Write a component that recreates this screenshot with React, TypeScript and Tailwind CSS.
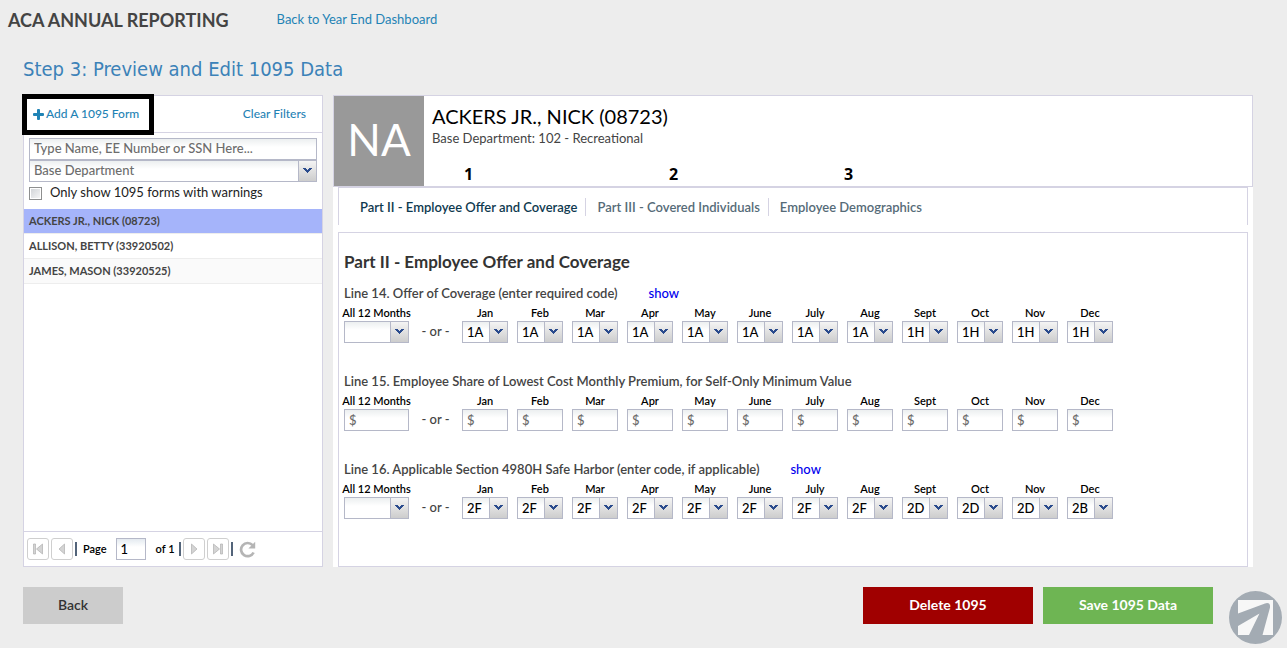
import { useId, useState } from "react";
import type { ReactNode } from "react";

const MONTHS = ["Jan", "Feb", "Mar", "Apr", "May", "June", "July", "Aug", "Sept", "Oct", "Nov", "Dec"];

const OFFER_CODES = ["1A", "1A", "1A", "1A", "1A", "1A", "1A", "1A", "1H", "1H", "1H", "1H"];
const HARBOR_CODES = ["2F", "2F", "2F", "2F", "2F", "2F", "2F", "2F", "2D", "2D", "2D", "2B"];

const OFFER_OPTIONS = ["", "1A", "1B", "1C", "1D", "1E", "1F", "1G", "1H"];
const HARBOR_OPTIONS = ["", "2A", "2B", "2C", "2D", "2E", "2F", "2G", "2H"];

const EMPLOYEES = ["ACKERS JR., NICK (08723)", "ALLISON, BETTY (33920502)", "JAMES, MASON (33920525)"];

const TABS = ["Part II - Employee Offer and Coverage", "Part III - Covered Individuals", "Employee Demographics"];

const FIELD =
  "h-[22px] w-full rounded-none border border-[#b5b8c8] bg-linear-to-b from-[#eceff0] to-white to-40% px-1 outline-none";

function Chevron() {
  return (
    <span className="pointer-events-none absolute inset-y-px right-px flex w-[18px] items-center justify-center border-l border-[#b5b8c8] bg-linear-to-b from-[#f4f4f4] to-[#cdcdcd] pr-px">
      <svg width="9" height="6" viewBox="0 0 9 6" fill="#2a4b8d" shapeRendering="crispEdges" aria-hidden="true">
        <path d="M0 0H3V1H4V2H5V1H6V0H9V1H8V2H7V3H6V4H5V5H4V4H3V3H2V2H1V1H0Z" />
      </svg>
    </span>
  );
}

function CodeSelect({ id, value, options }: { id: string; value: string; options: string[] }) {
  return (
    <div className="relative">
      <select id={id} defaultValue={value} className={`${FIELD} block appearance-none text-[13px] leading-5 font-medium text-black`}>
        {options.map((o) => (
          <option key={o} value={o}>
            {o}
          </option>
        ))}
      </select>
      <Chevron />
    </div>
  );
}

function MoneyInput({ id }: { id: string }) {
  return (
    <input id={id} type="text" placeholder="$" className={`${FIELD} block text-[13px] font-medium text-black placeholder:text-[#6d6d6d]`} />
  );
}

function MonthLine({
  title,
  help,
  renderField,
}: {
  title: string;
  help?: boolean;
  renderField: (id: string, index: number) => ReactNode;
}) {
  const base = useId();
  return (
    <section className="mb-[26px]">
      <div className="flex h-6 items-center gap-[31px] pt-px text-[13px]">
        <h3 className="font-semibold text-[#444]">{title}</h3>
        {help && (
          <a href="#help" className="font-medium text-[#0000ee]">
            show
          </a>
        )}
      </div>
      <div className="flex gap-[9px]">
        <div className="flex w-[65px] flex-col items-center">
          <label htmlFor={`${base}all`} className="block h-4 text-[11px] leading-4 font-semibold whitespace-nowrap text-black">
            All 12 Months
          </label>
          <div className="w-full">{renderField(`${base}all`, -1)}</div>
        </div>
        <span className="w-[35px] pt-4 text-center text-[13px] leading-5 font-medium text-[#444]">- or -</span>
        {MONTHS.map((m, i) => (
          <div key={m} className="w-[46px]">
            <label htmlFor={`${base}${m}`} className="block h-4 text-center text-[11px] leading-4 font-semibold text-black">
              {m}
            </label>
            {renderField(`${base}${m}`, i)}
          </div>
        ))}
      </div>
    </section>
  );
}

function PagerButton({ label, path, bar }: { label: string; path: string; bar?: string }) {
  return (
    <button
      type="button"
      aria-label={label}
      className="flex size-[22px] shrink-0 items-center justify-center rounded-[3px] border border-[#cfcfcf] bg-white"
    >
      <svg width="12" height="12" viewBox="0 0 12 12" fill="#d4d4d4" stroke="#b0b0b0" strokeWidth="0.7" aria-hidden="true">
        {bar && <path d={bar} />}
        <path d={path} />
      </svg>
    </button>
  );
}

function PagerBar() {
  return <span className="h-[14px] w-[2px] shrink-0 bg-[#53647a]" />;
}

function Sidebar() {
  const [selected, setSelected] = useState(0);
  return (
    <aside className="relative flex w-[300px] shrink-0 flex-col border border-[#d5d3e3] bg-white">
      <div className="flex h-[37px] items-center justify-between border-b border-[#d5d3e3] pr-4 pl-[9px] text-[12px] font-medium text-[#1f83b5]">
        <button type="button" className="flex items-center gap-[2px]">
          <svg width="11" height="11" viewBox="0 0 11 11" fill="currentColor" aria-hidden="true">
            <path d="M4 1Q4 0 5 0H6Q7 0 7 1V4H10Q11 4 11 5V6Q11 7 10 7H7V10Q7 11 6 11H5Q4 11 4 10V7H1Q0 7 0 6V5Q0 4 1 4H4Z" />
          </svg>
          Add A 1095 Form
        </button>
        <button type="button">Clear Filters</button>
      </div>
      <span className="pointer-events-none absolute -top-[2px] -left-[2px] h-[41px] w-[132px] border-5 border-black" />

      <div className="px-[5px] pt-[5px]">
        <input
          type="text"
          aria-label="Search employees"
          placeholder="Type Name, EE Number or SSN Here..."
          className={`${FIELD} block pb-[2px] text-[13px] font-medium placeholder:text-[#6d6d6d]`}
        />
        <div className="relative">
          <select aria-label="Base Department" className={`${FIELD} block appearance-none pb-[2px] text-[13px] leading-[18px] font-medium text-[#6d6d6d]`}>
            <option>Base Department</option>
          </select>
          <Chevron />
        </div>
        <label className="flex h-[22px] items-center gap-2 text-[13px] text-[#222]">
          <input
            type="checkbox"
            className="size-[13px] appearance-none border border-[#8e8f8f] bg-linear-to-br from-[#cfd2d6] to-[#f8f8f8] ring-1 ring-white ring-inset checked:bg-[#2a4b8d]"
          />
          Only show 1095 forms with warnings
        </label>
      </div>

      <ul className="mt-[5px]">
        {EMPLOYEES.map((name, i) => (
          <li key={name} className="border-b border-[#ededed] odd:bg-[#fafafa]">
            <button
              type="button"
              onClick={() => setSelected(i)}
              aria-pressed={selected === i}
              className={`block h-6 w-full px-[5px] text-left text-[11px] font-bold text-[#444] ${selected === i ? "bg-[#a5b4fa]" : ""}`}
            >
              {name}
            </button>
          </li>
        ))}
      </ul>

      <div className="mt-auto flex h-[35px] items-center gap-[2px] border-t border-[#d5d3e3] px-[3px] text-[11px] font-semibold text-black">
        <PagerButton label="First page" bar="M1.5 1H3.5V11H1.5Z" path="M10.5 1V11L4.5 6Z" />
        <PagerButton label="Previous page" path="M8.5 1V11L3 6Z" />
        <PagerBar />
        <label className="ml-1 flex items-center gap-[9px]">
          Page
          <input
            type="text"
            defaultValue="1"
            className="h-[22px] w-[30px] border border-[#b5b8c8] bg-linear-to-b from-[#e4eaf0] to-white to-40% px-1 text-[13px] font-medium"
          />
        </label>
        <span className="mr-px ml-2 w-5 whitespace-nowrap">of 1</span>
        <PagerBar />
        <PagerButton label="Next page" path="M3.5 1V11L9 6Z" />
        <PagerButton label="Last page" bar="M8.5 1H10.5V11H8.5Z" path="M1.5 1V11L7.5 6Z" />
        <PagerBar />
        <button type="button" aria-label="Refresh" className="ml-1">
          <svg width="17" height="17" viewBox="0 0 17 17" fill="none" aria-hidden="true">
            <path d="M13.6 4.2A6.6 6.6 0 1 0 14.6 11.5" stroke="#b5b5b5" strokeWidth="2.7" />
            <path d="M16.2 0.8V7.4H9.4Z" fill="#b5b5b5" />
          </svg>
        </button>
      </div>
    </aside>
  );
}

function Detail() {
  const [tab, setTab] = useState(0);
  return (
    <main className="flex min-w-0 flex-1 flex-col bg-white">
      <header className="relative flex h-[92px] border border-[#d5d3e3]">
        <div className="flex w-[90px] items-center justify-center bg-[#999] pb-1 text-[44px] text-white">NA</div>
        <div className="pt-2 pl-2">
          <h2 className="text-[20px] leading-6 text-black">ACKERS JR., NICK (08723)</h2>
          <p className="text-[13px] leading-5 text-[#444]">Base Department: 102 - Recreational</p>
        </div>
        <div className="absolute bottom-0 left-[130px] flex font-['Open_Sans',sans-serif] text-[16px] leading-6 font-bold text-black">
          <span className="w-[205px]">1</span>
          <span className="w-[175px]">2</span>
          <span>3</span>
        </div>
      </header>

      <nav className="mx-[5px] flex h-[38px] items-center border-x border-t border-[#d5d3e3] pl-[10px] text-[13px] font-semibold">
        {TABS.map((t, i) => (
          <button
            key={t}
            type="button"
            onClick={() => setTab(i)}
            className={`h-[18px] border-r border-[#d5d3e3] pr-2 pl-[11px] leading-[18px] whitespace-nowrap last:border-r-0 ${
              tab === i ? "text-[#0f3a50]" : "text-[#566b78]"
            }`}
          >
            {t}
          </button>
        ))}
      </nav>

      <div className="mx-[5px] mt-[7px] flex-1 border border-[#d5d3e3] px-[5px] pt-[15px]">
        <h2 className="h-[33px] text-[17px] leading-7 font-bold text-[#333]">{TABS[0]}</h2>
        <MonthLine
          title="Line 14. Offer of Coverage (enter required code)"
          help
          renderField={(id, i) => <CodeSelect id={id} value={OFFER_CODES[i] ?? ""} options={OFFER_OPTIONS} />}
        />
        <MonthLine
          title="Line 15. Employee Share of Lowest Cost Monthly Premium, for Self-Only Minimum Value"
          renderField={(id) => <MoneyInput id={id} />}
        />
        <MonthLine
          title="Line 16. Applicable Section 4980H Safe Harbor (enter code, if applicable)"
          help
          renderField={(id, i) => <CodeSelect id={id} value={HARBOR_CODES[i] ?? ""} options={HARBOR_OPTIONS} />}
        />
      </div>
    </main>
  );
}

export default function App() {
  return (
    <div className="min-h-screen bg-[#ededed] font-[Lato,sans-serif]">
      <header className="flex h-10 items-center gap-12 pl-2">
        <h1 className="text-[18px] font-bold text-[#444]">ACA ANNUAL REPORTING</h1>
        <a href="#dashboard" className="text-[13px] text-[#1f83b5]">
          Back to Year End Dashboard
        </a>
      </header>
      <div className="pr-[34px] pl-[23px]">
        <h2 className="flex h-[55px] items-center pt-[3px] font-['DejaVu_Sans_Condensed','Noto_Sans',sans-serif] text-[20px] text-[#3c82b8]">
          Step 3: Preview and Edit 1095 Data
        </h2>
        <div className="flex min-h-[472px] gap-[10px]">
          <Sidebar />
          <Detail />
        </div>
        <footer className="flex gap-[10px] pt-5 pr-10 text-[14px] font-bold">
          <button type="button" className="mr-auto h-[37px] w-[100px] bg-[#ccc] pb-[2px] font-semibold text-[#333]">
            Back
          </button>
          <button type="button" className="h-[37px] w-[170px] bg-[#a00000] pb-[2px] text-white">
            Delete 1095
          </button>
          <button type="button" className="h-[37px] w-[170px] bg-[#6eb553] pb-[2px] text-white">
            Save 1095 Data
          </button>
        </footer>
      </div>
      <svg className="fixed right-[5px] bottom-1" width="53" height="53" viewBox="0 0 53 53" aria-hidden="true">
        <circle cx="26.5" cy="26.5" r="26.5" fill="#a3abb3" />
        <path d="M9 9H44V44H9Z" fill="#f7f7f7" />
        <path d="M9 22.5L36 12.4Q41.6 11 41 16.5L33.5 44H20L30.5 22.5L9 35Z" fill="#a3abb3" />
      </svg>
    </div>
  );
}
